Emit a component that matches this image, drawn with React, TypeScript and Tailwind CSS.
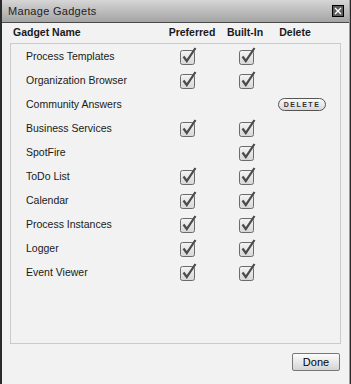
const gadgets = [
    { name: 'Process Templates', preferred: true, builtIn: true },
    { name: 'Organization Browser', preferred: true, builtIn: true },
    { name: 'Community Answers', preferred: false, builtIn: false, deletable: true },
    { name: 'Business Services', preferred: true, builtIn: true },
    { name: 'SpotFire', preferred: false, builtIn: true },
    { name: 'ToDo List', preferred: true, builtIn: true },
    { name: 'Calendar', preferred: true, builtIn: true },
    { name: 'Process Instances', preferred: true, builtIn: true },
    { name: 'Logger', preferred: true, builtIn: true },
    { name: 'Event Viewer', preferred: true, builtIn: true },
];

const CheckBox = () => (
    <svg width="17" height="18" viewBox="0 0 17 18">
        <defs>
            <linearGradient id="cbfill" x1="0" y1="0" x2="0" y2="1">
                <stop offset="0" stopColor="#f4f4f4" />
                <stop offset="1" stopColor="#d6d6d6" />
            </linearGradient>
        </defs>
        <rect x="0.5" y="3.5" width="14" height="14" rx="2" fill="url(#cbfill)" stroke="#6b6b6b" />
        <path d="M3.5 9.5 L6.8 14 L15.5 1" fill="none" stroke="#4a4a4a" strokeWidth="2.2" strokeLinejoin="miter" />
    </svg>
);

const App = () => {
    return (
        <div className="flex w-[351px] h-[384px] bg-[#2a2a2a] font-['Liberation_Sans',Arial,sans-serif] text-[#1a1a1a]">
            <div className="w-[2px]" />
            <div className="flex flex-col w-[348px] bg-[#f1f2f1] border-r border-[#9a9a9a]">
                <div className="flex items-center justify-between h-[23px] pl-[6px] pr-[4px] bg-gradient-to-b from-[#d6d6d6] to-[#a4a4a4] border-b border-[#4a4a4a]">
                    <span className="text-[11px] text-[#222] tracking-[0.3px]">Manage Gadgets</span>
                    <div className="mr-[1px] w-[12px] h-[12px] border border-black bg-[#5c5c5c] flex items-center justify-center">
                        <svg width="8" height="8" viewBox="0 0 8 8">
                            <path d="M1 1 L7 7 M7 1 L1 7" stroke="#fff" strokeWidth="1.4" />
                        </svg>
                    </div>
                </div>

                <div className="flex items-center h-[20px] text-[10.5px] font-bold whitespace-nowrap">
                    <span className="pl-[11px] w-[166px]">Gadget Name</span>
                    <span className="w-[48px] text-center">Preferred</span>
                    <span className="w-[40px] ml-[9px] text-center">Built-In</span>
                    <span className="w-[32px] ml-[14px] text-center">Delete</span>
                </div>

                <div className="mx-[8px] h-[301px] border border-[#cacaca] pt-[1px]">
                    {gadgets.map((g) => (
                        <div key={g.name} className="flex items-center h-[24px] text-[10.5px]">
                            <span className="w-[169px] pl-[15px]">{g.name}</span>
                            <div className="w-[15px] h-[18px] -mt-[3px]">{g.preferred && <CheckBox />}</div>
                            <div className="w-[15px] h-[18px] -mt-[3px] ml-[44px]">{g.builtIn && <CheckBox />}</div>
                            {g.deletable && (
                                <button className="ml-[24px] -mt-[2px] w-[48px] h-[13px] rounded-full border border-[#555] bg-gradient-to-b from-[#fafafa] to-[#d8d8d8] text-[7px] font-bold tracking-[1.5px] text-[#333] leading-none flex items-center justify-center">
                                    DELETE
                                </button>
                            )}
                        </div>
                    ))}
                </div>

                <div className="flex justify-end pr-[9px] pt-[9px]">
                    <button className="w-[48px] h-[18px] rounded-[2px] border border-[#777] bg-gradient-to-b from-[#fcfcfc] to-[#d4d4d4] text-[11px] text-black leading-none">
                        Done
                    </button>
                </div>
            </div>
        </div>
    );
};

export default App;
